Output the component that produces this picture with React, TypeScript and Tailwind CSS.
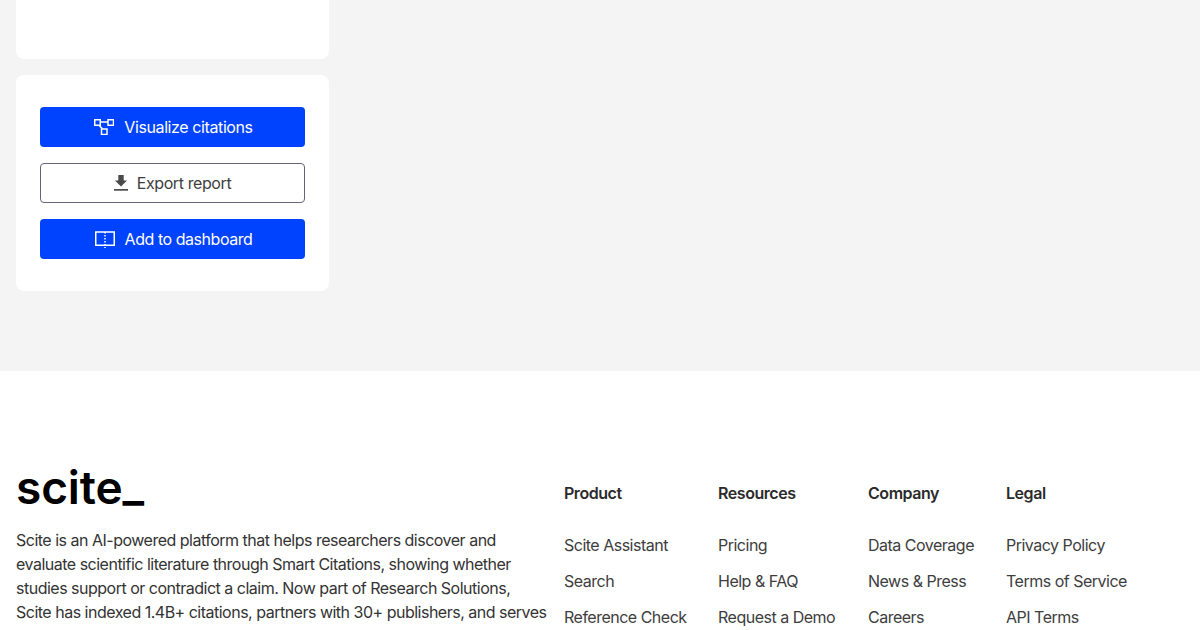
import React from "react";

const font = { fontFamily: "Inter, sans-serif" };

const columns = [
  { title: "Product", width: "w-[122px]", links: ["Scite Assistant", "Search", "Reference Check"] },
  { title: "Resources", width: "w-[118px]", links: ["Pricing", "Help & FAQ", "Request a Demo"] },
  { title: "Company", width: "w-[106px]", links: ["Data Coverage", "News & Press", "Careers"] },
  { title: "Legal", width: "w-[119px]", links: ["Privacy Policy", "Terms of Service", "API Terms"] },
];

function GraphIcon() {
  return (
    <svg width="20" height="16" viewBox="0 0 20 16" fill="none" stroke="currentColor" strokeWidth="1.5">
      <rect x="0.75" y="0.75" width="5.5" height="5.5" />
      <rect x="14" y="0.75" width="5.5" height="5.5" />
      <rect x="7.5" y="10" width="5.5" height="5.5" />
      <path d="M6.2 3h7.8M5 6.2l3.6 3.8" />
    </svg>
  );
}

function DownloadIcon() {
  return (
    <svg width="14" height="16" viewBox="0 0 14 16" fill="currentColor">
      <path d="M4.3 0h5.4v5.4h3.3L7 11.6 1 5.4h3.3z" />
      <rect x="0" y="14" width="14" height="1.7" />
    </svg>
  );
}

function BookIcon() {
  return (
    <svg width="20" height="17" viewBox="0 0 20 17" fill="none" stroke="currentColor" strokeWidth="1.5">
      <path d="M10 1H0.75v13.3H19.25V1z" />
      <path d="M10 1v16" strokeDasharray="1.6 1.4" />
    </svg>
  );
}

export default function App() {
  return (
    <div className="h-[630px] overflow-hidden bg-white text-[#2b2b2b]" style={font}>
      <div className="bg-[#f4f4f4] h-[371px] px-4 flex flex-col gap-4">
        <div className="w-[313px] h-[59px] bg-white rounded-b-lg" />
        <div className="w-[313px] bg-white rounded-lg px-6 pt-8 pb-8 flex flex-col gap-4">
          <button className="h-10 pl-0.5 rounded bg-[#0043ff] text-white text-base tracking-[-0.4px] flex items-center justify-center gap-2.5">
            <GraphIcon />
            Visualize citations
          </button>
          <button className="h-10 rounded border border-[#65657a] text-[#3d3d3d] text-base tracking-[-0.4px] flex items-center justify-center gap-[9px]">
            <span className="text-[#4a4a4a]"><DownloadIcon /></span>
            Export report
          </button>
          <button className="h-10 pl-0.5 rounded bg-[#0043ff] text-white text-base tracking-[-0.45px] flex items-center justify-center gap-2.5">
            <BookIcon />
            Add to dashboard
          </button>
        </div>
      </div>
      <div className="px-4 pt-[92px] flex">
        <div className="w-[548px] shrink-0">
          <div className="text-[46px] leading-12 font-semibold text-black tracking-[-0.1px]">
            scite<span className="relative -top-[3px]">_</span>
          </div>
          <p className="mt-[17px] w-[531px] text-base leading-6 tracking-[-0.5px] text-[#333]">
            Scite is an AI-powered platform that helps researchers discover and evaluate scientific literature through Smart Citations, showing whether studies support or contradict a claim. Now part of Research Solutions, Scite has indexed 1.4B+ citations, partners with 30+ publishers, and serves
          </p>
        </div>
        <div className="flex gap-8 pt-[18px]">
          {columns.map((col) => (
            <div key={col.title} className={col.width}>
              <div className="text-base leading-6 font-semibold tracking-[-0.45px] text-[#2b2b2b]">{col.title}</div>
              <ul className="mt-7 flex flex-col gap-3">
                {col.links.map((link) => (
                  <li key={link} className="text-base leading-6 tracking-[-0.5px] text-[#3d3d3d] whitespace-nowrap">{link}</li>
                ))}
              </ul>
            </div>
          ))}
        </div>
      </div>
    </div>
  );
}
